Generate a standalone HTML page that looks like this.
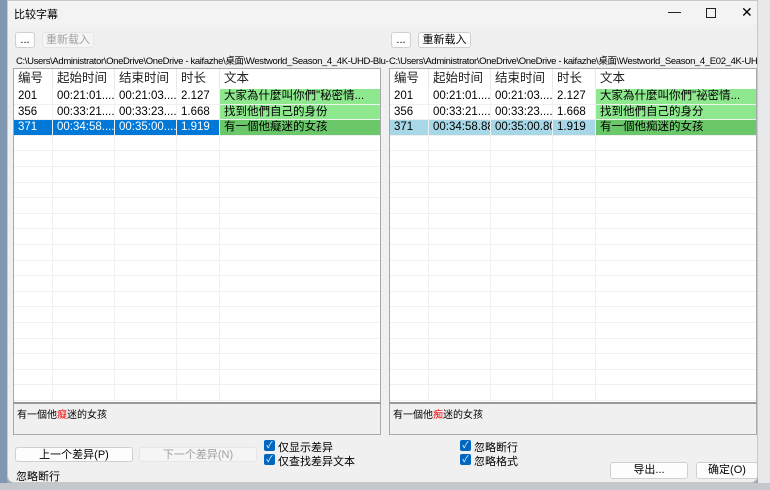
<!DOCTYPE html>
<html><head><meta charset="utf-8">
<style>
*{box-sizing:border-box;margin:0;padding:0}
body{width:770px;height:490px;overflow:hidden;background:#9aa8b6;font-family:"Liberation Sans","Noto Sans CJK SC",sans-serif;font-size:11px;color:#000;position:relative}
.abs{position:absolute}
.win{left:7px;top:0;width:751px;height:483px;background:#f0f0f0;border:1px solid #c8c8c8;border-radius:0 0 7px 7px;overflow:hidden}
.title{left:0;top:0;width:751px;height:24px;background:#f3f3f3}
.btn{position:absolute;background:#fdfdfd;border:1px solid #d0d0d0;border-radius:3px;text-align:center;font-size:11px;line-height:14px}
.dis{background:#f5f5f5;border-color:#e6e6e6;color:#a0a0a0}
.path{position:absolute;font-size:9.5px;white-space:nowrap;overflow:hidden;letter-spacing:-0.35px}
.list{position:absolute;background:#fff;border:1px solid #a8a8a8;overflow:hidden}
.row{position:absolute;left:0;height:16px;width:100%;border-bottom:1px solid #f0f0f0}
.c{position:absolute;top:0;height:100%;border-right:1px solid #f0f0f0;padding-left:4px;white-space:nowrap;overflow:hidden;line-height:15px;font-size:11.5px}
.hd .c{font-size:12.5px;line-height:18px;color:#222}
.diff{position:absolute;border:1px solid #a8a8a8;border-top:2px solid #999;background:#f0f0f0;font-size:10px;padding:2px 3px}
.cb{position:absolute;width:11px;height:11px;background:#0067c0;border-radius:2px;color:#fff;font-size:9px;line-height:11px;text-align:center}
.lbl{position:absolute;font-size:11px;white-space:nowrap}
</style></head><body>
<div class="abs" style="left:0;top:0;width:7px;height:490px;background:#7f97b0"></div>
<div class="abs" style="left:0;top:483px;width:770px;height:7px;background:#c4c8cc"></div>
<div class="abs" style="left:758px;top:0;width:12px;height:483px;background:#e6e8ea"></div>
<div class="abs win">
 <div class="abs title"></div>
 <div class="lbl" style="left:6px;top:5px;font-size:11px">比较字幕</div>
 <div class="lbl" style="left:660px;top:3px;font-size:13px">—</div>
 <div class="abs" style="left:698px;top:7px;width:10px;height:10px;border:1px solid #222"></div>
 <div class="lbl" style="left:733px;top:3px;font-size:14px">✕</div>

 <div class="btn" style="left:7px;top:31px;width:20px;height:16px">...</div>
 <div class="btn dis" style="left:34px;top:31px;width:52px;height:16px">重新载入</div>
 <div class="btn" style="left:383px;top:31px;width:20px;height:16px">...</div>
 <div class="btn" style="left:410px;top:31px;width:53px;height:16px">重新载入</div>

 <div class="path" style="left:8px;top:52px;width:373px">C:\Users\Administrator\OneDrive\OneDrive - kaifazhe\桌面\Westworld_Season_4_4K-UHD-Blu-ray_Dolby</div>
 <div class="path" style="left:381px;top:52px;width:370px">C:\Users\Administrator\OneDrive\OneDrive - kaifazhe\桌面\Westworld_Season_4_E02_4K-UHD-Blu-ray</div>

 <div class="list" id="L" style="left:5px;top:67px;width:368px;height:335px"></div>
 <div class="list" id="R" style="left:381px;top:67px;width:368px;height:335px"></div>

 <div class="diff" style="left:5px;top:401px;width:368px;height:33px">有一個他<span style="color:#e00">癡</span>迷的女孩</div>
 <div class="diff" style="left:381px;top:401px;width:368px;height:33px">有一個他<span style="color:#e00">痴</span>迷的女孩</div>

 <div class="btn" style="left:7px;top:446px;width:118px;height:15px">上一个差异(P)</div>
 <div class="btn dis" style="left:131px;top:446px;width:118px;height:15px">下一个差异(N)</div>
 <div class="cb" style="left:256px;top:439px">✓</div><div class="lbl" style="left:270px;top:438px">仅显示差异</div>
 <div class="cb" style="left:256px;top:453px">✓</div><div class="lbl" style="left:270px;top:452px">仅查找差异文本</div>
 <div class="cb" style="left:452px;top:439px">✓</div><div class="lbl" style="left:466px;top:438px">忽略断行</div>
 <div class="cb" style="left:452px;top:453px">✓</div><div class="lbl" style="left:466px;top:452px">忽略格式</div>
 <div class="lbl" style="left:8px;top:467px">忽略断行</div>
 <div class="btn" style="left:602px;top:461px;width:78px;height:17px;line-height:15px">导出...</div>
 <div class="btn" style="left:688px;top:461px;width:62px;height:17px;line-height:15px">确定(O)</div>
</div>
<script>
function build(id,right){
 var el=document.getElementById(id);
 var cols=[0,39,101,163,206,368];
 var data=[["编号","起始时间","结束时间","时长","文本"],
 ["201","00:21:01....","00:21:03....","2.127",right?"大家為什麼叫你們\"祕密情...":"大家為什麼叫你們\"秘密情..."],
 ["356","00:33:21....","00:33:23....","1.668",right?"找到他們自己的身分":"找到他們自己的身份"],
 ["371",right?"00:34:58.88":"00:34:58....",right?"00:35:00.80":"00:35:00....","1.919",right?"有一個他痴迷的女孩":"有一個他癡迷的女孩"]];
 var h='',y=0;
 for(var r=0;r<22;r++){
  var hgt=r==0?20:15.6;
  var cls=r==0?'row hd':'row';
  h+='<div class="'+cls+'" style="top:'+y+'px;height:'+hgt+'px;'+(r==0?'border-bottom:none':'')+'">';
  for(var c=0;c<5;c++){
   var bg='',col='';
   if(r>0&&r<4&&c==4){bg=r==3?'#6ac86a':'#8ee88e';}
   if(r==3&&c<4){bg=right?'#a8d8e8':'#0078d7';col=right?'#000':'#fff';}
   var t=(r<4)?data[r][c]:'';
   h+='<div class="c" style="left:'+cols[c]+'px;width:'+(cols[c+1]-cols[c])+'px;'+(bg?'background:'+bg+';':'')+(col?'color:'+col+';':'')+(r==0?'border-right:1px solid #e8e8e8;':'')+'">'+t.replace(/"/g,'&quot;')+'</div>';
  }
  h+='</div>';
  y+=hgt;
 }
 el.innerHTML=h;
}
build('L',false);build('R',true);
</script>
</body></html>
